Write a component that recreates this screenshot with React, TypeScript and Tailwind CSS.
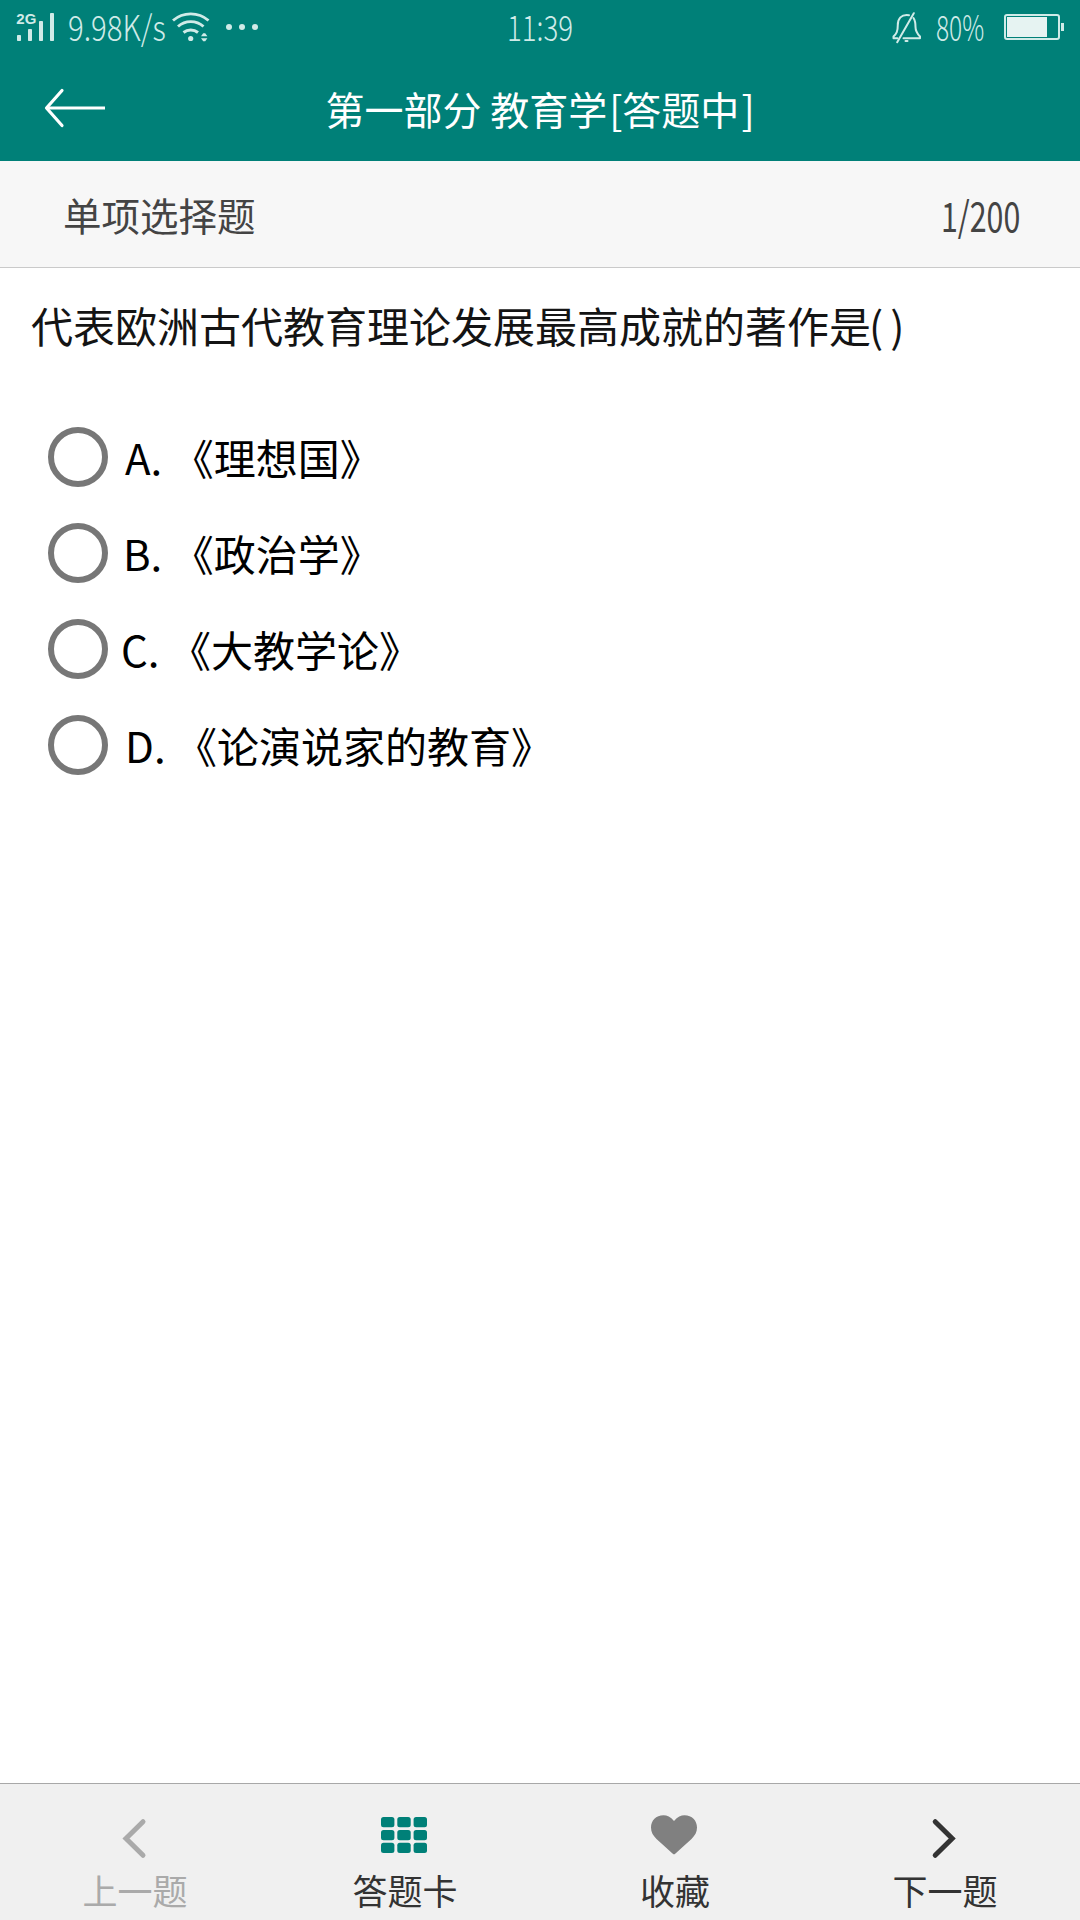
import { useState } from "react";

const OPTIONS = [
  { key: "A", text: "《理想国》", indent: "ml-[17px]" },
  { key: "B", text: "《政治学》", indent: "ml-[15px]" },
  { key: "C", text: "《大教学论》", indent: "ml-[13px]" },
  { key: "D", text: "《论演说家的教育》", indent: "ml-[17px]" },
];

function SignalIcon() {
  return (
    <svg width="40" height="34" viewBox="0 -2 40 34" fill="currentColor" className="-mt-[2px] overflow-visible">
      <text x="0.3" y="12" fontSize="15" fontWeight="700" fontFamily="Liberation Sans, sans-serif">
        2G
      </text>
      <rect x="1" y="23" width="4" height="6" rx="0.8" />
      <rect x="12" y="17" width="4" height="12" rx="0.8" />
      <rect x="23" y="9" width="4" height="20" rx="0.8" />
      <rect x="34" y="1" width="4" height="28" rx="0.8" />
    </svg>
  );
}

function WifiIcon() {
  return (
    <svg width="38" height="30" viewBox="0 0 38 30" fill="none" stroke="currentColor" strokeWidth="2.9">
      <path d="M1 8.500 A27 27 0 0 1 36.500 8.500" />
      <path d="M6 14.500 A19 19 0 0 1 31.500 14.500" />
      <path d="M11.500 20.500 A11.500 11.500 0 0 1 26 20.500" />
      <circle cx="18.700" cy="26.500" r="2.600" fill="currentColor" stroke="none" />
      <path d="M29 24.200 L31.200 21.200 H33.200 L35.400 24.200 Z M29 26.200 L31.200 29.200 H33.200 L35.400 26.200 Z" fill="currentColor" stroke="none" />
    </svg>
  );
}

function BellOffIcon() {
  return (
    <svg width="30" height="32" viewBox="0 0 30 32" fill="none" stroke="currentColor" strokeWidth="2" strokeLinecap="round" strokeLinejoin="round">
      <path d="M17 3.200 C9 2 5.800 7 5.800 13 C5.800 19.500 4.500 21.500 1.500 24.500 V26.300 H5.500" />
      <path d="M21.500 6 C23.500 9 23.500 12 23.500 15 C23.500 20 25.500 22 28 24.500 V26.300 H11.500" />
      <path d="M21.800 1.200 L5.200 30.200" />
      <path d="M13.500 29 H15.500" />
    </svg>
  );
}

function StatusBar() {
  return (
    <div className="flex h-[54px] items-start pt-3 pl-4 text-[35px] whitespace-nowrap text-[#d0ebe8]">
      <SignalIcon />
      <div className="ml-[12px] h-8 w-[104px] leading-[28px] font-light">
        <span className="inline-block origin-left scale-x-[0.84]">9.98K/s</span>
      </div>
      <WifiIcon />
      <div className="mt-3 ml-[16px] flex gap-[7px]">
        <i className="size-[6px] rounded-full bg-current" />
        <i className="size-[6px] rounded-full bg-current" />
        <i className="size-[6px] rounded-full bg-current" />
      </div>
      <div className="ml-[249px] h-8 w-[68px] leading-[28px] font-light">
        <span className="inline-block origin-left scale-x-[0.79]">11:39</span>
      </div>
      <div className="ml-[317px]">
        <BellOffIcon />
      </div>
      <div className="ml-[14px] h-8 w-[50px] leading-[27px] font-light">
        <span className="inline-block origin-left scale-x-[0.7]">80%</span>
      </div>
      <div className="mt-[2px] ml-[18px] flex items-center">
        <div className="h-[26px] w-[56px] rounded-[3px] border-2 border-current p-px">
          <div className="h-full w-10 bg-[#e6f3f2]" />
        </div>
        <div className="ml-px h-2 w-[3px] bg-current" />
      </div>
    </div>
  );
}

function TitleBar() {
  return (
    <div className="grid h-[107px] grid-cols-[1fr_auto_1fr] items-center text-white">
      <button className="ml-[44px] w-16">
        <svg width="62" height="40" viewBox="0 0 62 40" fill="none" stroke="currentColor" strokeWidth="3.200" strokeLinecap="round" strokeLinejoin="round">
          <path d="M18 2.500 L2.500 20 L18 37.500" />
          <path d="M2.500 20 H61" strokeLinecap="butt" />
        </svg>
      </button>
      <h1 className="text-[39px] leading-[56px]">
        第一部分 教育学<span className="ml-[2px]">[答题中</span>
        <span className="ml-[2px]">]</span>
      </h1>
      <div />
    </div>
  );
}

function PrevIcon() {
  return (
    <svg width="48" height="48" fill="none" stroke="currentColor" strokeWidth="5" strokeLinecap="round" strokeLinejoin="miter">
      <path d="M32 9.700 L15 26.500 L32 43.300" />
    </svg>
  );
}

function CardIcon() {
  const cells = [0, 1, 2];
  return (
    <svg width="48" height="48" fill="#008078">
      {cells.map((r) =>
        cells.map((c) => (
          <rect key={`${r}${c}`} x={c * 16.3} y={5 + r * 12.9} width="13.4" height="10.300" rx="2.500" />
        ))
      )}
    </svg>
  );
}

function HeartIcon() {
  return (
    <svg width="48" height="48" fill="#808080">
      <path d="M23 9 C19.500 4.800 16 3.200 12.500 3.200 C5 3.200 0 8.500 0 15.500 C0 20 2 23.500 5.500 27 L21.800 41.800 Q23 42.800 24.200 41.800 L40.500 27 C44 23.500 46 20 46 15.500 C46 8.500 41 3.200 33.500 3.200 C30 3.200 26.500 4.800 23 9 Z" />
    </svg>
  );
}

function NextIcon() {
  return (
    <svg width="48" height="48" fill="none" stroke="currentColor" strokeWidth="5" strokeLinecap="round" strokeLinejoin="miter">
      <path d="M14.200 9.700 L31.200 26.500 L14.200 43.300" />
    </svg>
  );
}

const TABS = [
  { label: "上一题", icon: <PrevIcon />, disabled: true },
  { label: "答题卡", icon: <CardIcon />, disabled: false },
  { label: "收藏", icon: <HeartIcon />, disabled: false },
  { label: "下一题", icon: <NextIcon />, disabled: false },
];

export default function App() {
  const [picked, setPicked] = useState<string | null>(null);

  return (
    <div className="flex h-[1920px] w-[1080px] flex-col overflow-hidden bg-white font-['Noto_Sans_CJK_SC',sans-serif]">
      <header className="shrink-0 bg-[#008078]">
        <StatusBar />
        <TitleBar />
      </header>

      <div className="flex h-[107px] shrink-0 items-center justify-between border-b border-[#cacaca] bg-[#f7f7f7] pr-[61px] pl-[63px] text-[38.5px] leading-[56px] text-[#444]">
        <span>单项选择题</span>
        <span className="w-[78px] text-[41px] whitespace-nowrap">
          <span className="inline-block origin-left scale-x-[0.74]">1/200</span>
        </span>
      </div>

      <main className="flex-1">
        <p className="h-[141px] pt-[27px] pl-[31px] text-[42px] leading-[60px] text-[#141414]">
          代表欧洲古代教育理论发展最高成就的著作是
          <span className="-ml-[2px] tracking-[7px]">()</span>
        </p>
        {OPTIONS.map((o) => (
          <button
            key={o.key}
            onClick={() => setPicked(o.key)}
            className="flex h-24 w-full items-center pl-12 text-left text-[42px] leading-[60px] text-black"
          >
            <span className="flex size-[60px] items-center justify-center rounded-full border-[6px] border-[#777]">
              {picked === o.key && <span className="size-7 rounded-full bg-[#008078]" />}
            </span>
            <span className={o.indent}>
              {o.key}. {o.text}
            </span>
          </button>
        ))}
      </main>

      <nav className="grid h-[137px] shrink-0 grid-cols-4 border-t border-[#a8a8a8] bg-[#f0f0f0]">
        {TABS.map((tab) => (
          <button
            key={tab.label}
            disabled={tab.disabled}
            className={`flex flex-col items-center pt-7 ${tab.disabled ? "text-[#aaa]" : "text-[#333]"}`}
          >
            {tab.icon}
            <span className="mt-[10px] text-[35px] leading-10">{tab.label}</span>
          </button>
        ))}
      </nav>
    </div>
  );
}
